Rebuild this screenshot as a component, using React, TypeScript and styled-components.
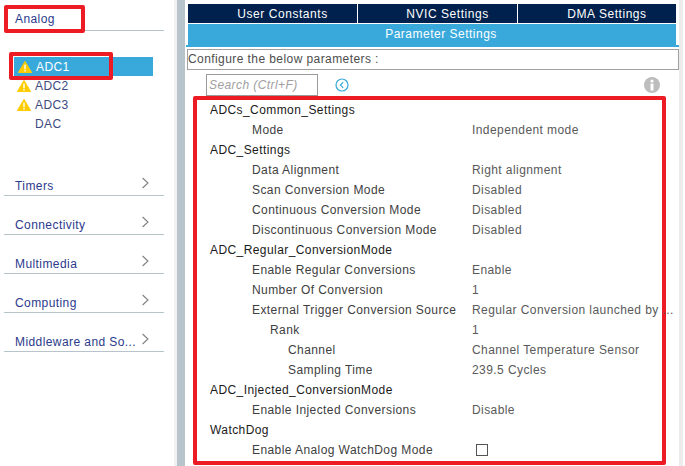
import React from 'react';
import styled, { createGlobalStyle } from 'styled-components';

const GlobalStyle = createGlobalStyle`
  html, body {
    margin: 0;
    padding: 0;
    background: #fff;
    overflow: hidden;
  }
  body {
    font-family: "Liberation Sans", Arial, sans-serif;
    font-size: 12px;
    letter-spacing: 0.42px;
  }
`;

const Page = styled.div`
  display: flex;
  width: 685px;
  height: 466px;
  overflow: hidden;
`;

const Sidebar = styled.aside`
  position: relative;
  box-sizing: border-box;
  width: 174px;
  flex: none;
  padding: 4px 10px 0 4px;
`;

const Divider = styled.div`
  flex: none;
  width: 3px;
  background: #f1f1f1;
`;

const Gutter = styled.div`
  flex: none;
  width: 8px;
  background: #b8c4cc;
`;

const RightRail = styled.div`
  flex: none;
  width: 4px;
  margin-right: 2px;
  background: #ececec;
`;

const SectionTitle = styled.div`
  box-sizing: border-box;
  height: 27px;
  padding: 8px 0 0 11px;
  border-bottom: 1px solid #b8c4cc;
  color: #2b3a8c;
  line-height: 14px;
`;

const AdcList = styled.ul`
  list-style: none;
  margin: 26px 11px 0 0;
  padding: 0 0 0 10px;
`;

const AdcRow = styled.li<{ $active?: boolean }>`
  display: flex;
  align-items: center;
  height: 19px;
  gap: 3px;
  padding-left: ${(p) => (p.$active ? 4 : 3)}px;
  color: ${(p) => (p.$active ? '#fff' : '#3c4a80')};
  background: ${(p) => (p.$active ? '#39a9dc' : 'transparent')};
`;

const IconSlot = styled.span`
  display: flex;
  width: 15px;
  flex: none;
`;

const Groups = styled.div`
  margin-top: 24px;
`;

const GroupRow = styled.div`
  box-sizing: border-box;
  display: flex;
  justify-content: space-between;
  height: 39px;
  padding: 22px 15px 0 11px;
  border-bottom: 1px solid #b8c4cc;
  color: #2b3a8c;
  line-height: 14px;
`;

const GroupLabel = styled.span`
  white-space: nowrap;
`;

const ChevronSlot = styled.span`
  display: flex;
  margin-top: -2px;
`;

const Callout = styled.div<{ $left: number; $top: number; $width: number; $height: number }>`
  position: absolute;
  left: ${(p) => p.$left}px;
  top: ${(p) => p.$top}px;
  width: ${(p) => p.$width}px;
  height: ${(p) => p.$height}px;
  box-sizing: border-box;
  border: 4px solid #ed1c24;
  border-radius: 2px;
`;

const Main = styled.main`
  flex: 1;
  min-width: 0;
  padding: 4px 0 0 2px;
`;

const Tabs = styled.div`
  display: grid;
  grid-template-columns: 169px 1fr 158px;
  gap: 1px;
  margin: 0 3px 0 1px;
`;

const Tab = styled.div`
  box-sizing: border-box;
  height: 19px;
  padding-left: 20px;
  background: #00214d;
  color: #fff;
  text-align: center;
  line-height: 20px;
  letter-spacing: 0.55px;
`;

const ActiveTab = styled.div`
  box-sizing: border-box;
  height: 21px;
  margin: 1px 3px 0 1px;
  padding-left: 18px;
  background: #39a9dc;
  color: #fff;
  text-align: center;
  line-height: 20px;
  letter-spacing: 0.5px;
`;

const TabEdge = styled.div`
  height: 2px;
  margin-left: -1px;
  background: #39a9dc;
`;

const ConfigureBox = styled.div`
  box-sizing: border-box;
  height: 21px;
  margin-top: 2px;
  border: 1px solid #a0a0a0;
  color: #4d4d4d;
  line-height: 18px;
  white-space: nowrap;
`;

const Toolbar = styled.div`
  display: flex;
  align-items: center;
  height: 22px;
  margin-top: 4px;
  padding: 0 19px 0 19px;
`;

const SearchBox = styled.div`
  box-sizing: border-box;
  width: 112px;
  height: 22px;
  padding-left: 2px;
  border: 1px solid #9a9a9a;
  color: #a0a0a0;
  font-style: italic;
  line-height: 20px;
  white-space: nowrap;
`;

const BackButton = styled.span`
  display: flex;
  margin-left: 17px;
`;

const InfoButton = styled.span`
  display: flex;
  margin-left: auto;
`;

const ParamPanel = styled.div`
  box-sizing: border-box;
  width: 473px;
  height: 369px;
  margin-left: 6px;
  padding-left: 13px;
  border: 4px solid #ed1c24;
  border-radius: 2px;
`;

const ParamRow = styled.div<{ $depth: number }>`
  display: flex;
  align-items: center;
  height: 20px;
  padding-left: ${(p) => [0, 42, 60, 78][p.$depth]}px;
  white-space: nowrap;
`;

const ParamName = styled.span<{ $depth: number }>`
  width: ${(p) => 262 - [0, 42, 60, 78][p.$depth]}px;
  flex: none;
  color: ${(p) => (p.$depth === 0 ? '#1a1a1a' : '#404040')};
`;

const ParamValue = styled.span`
  color: #595959;
`;

const CheckBox = styled.span`
  box-sizing: border-box;
  width: 12px;
  height: 12px;
  margin-left: 4px;
  border: 1px solid #555;
`;

const WarningIcon = () => (
  <svg width="14" height="12" viewBox="0 0 14 12">
    <path d="M7 0.5 L13.6 11.5 H0.4 Z" fill="#ffcc00" stroke="#ffcc00" strokeLinejoin="round" />
    <rect x="6.3" y="3.6" width="1.4" height="4.6" fill="#fff" />
    <rect x="6.3" y="9" width="1.4" height="1.5" fill="#fff" />
  </svg>
);

const Chevron = () => (
  <svg width="7" height="12" viewBox="0 0 7 12">
    <path d="M0.6 1 L6 6 L0.6 11" fill="none" stroke="#808080" strokeWidth="1.1" />
  </svg>
);

const BackIcon = () => (
  <svg width="14" height="14" viewBox="0 0 14 14">
    <circle cx="7" cy="7" r="6" fill="none" stroke="#39a9dc" strokeWidth="1.2" />
    <path d="M8.2 4.2 L5.4 7 L8.2 9.8" fill="none" stroke="#39a9dc" strokeWidth="1.2" />
  </svg>
);

const InfoIcon = () => (
  <svg width="16" height="16" viewBox="0 0 16 16">
    <circle cx="8" cy="8" r="8" fill="#bdbdbd" />
    <circle cx="8" cy="4" r="1.6" fill="#fff" />
    <rect x="6.5" y="6.6" width="3" height="7" fill="#fff" />
  </svg>
);

const adcs = [
  { name: 'ADC1', warn: true, active: true },
  { name: 'ADC2', warn: true },
  { name: 'ADC3', warn: true },
  { name: 'DAC', warn: false },
];

const groups = ['Timers', 'Connectivity', 'Multimedia', 'Computing', 'Middleware and So...'];

const params: { depth: number; name: string; value?: string; check?: boolean }[] = [
  { depth: 0, name: 'ADCs_Common_Settings' },
  { depth: 1, name: 'Mode', value: 'Independent mode' },
  { depth: 0, name: 'ADC_Settings' },
  { depth: 1, name: 'Data Alignment', value: 'Right alignment' },
  { depth: 1, name: 'Scan Conversion Mode', value: 'Disabled' },
  { depth: 1, name: 'Continuous Conversion Mode', value: 'Disabled' },
  { depth: 1, name: 'Discontinuous Conversion Mode', value: 'Disabled' },
  { depth: 0, name: 'ADC_Regular_ConversionMode' },
  { depth: 1, name: 'Enable Regular Conversions', value: 'Enable' },
  { depth: 1, name: 'Number Of Conversion', value: '1' },
  { depth: 1, name: 'External Trigger Conversion Source', value: 'Regular Conversion launched by ...' },
  { depth: 2, name: 'Rank', value: '1' },
  { depth: 3, name: 'Channel', value: 'Channel Temperature Sensor' },
  { depth: 3, name: 'Sampling Time', value: '239.5 Cycles' },
  { depth: 0, name: 'ADC_Injected_ConversionMode' },
  { depth: 1, name: 'Enable Injected Conversions', value: 'Disable' },
  { depth: 0, name: 'WatchDog' },
  { depth: 1, name: 'Enable Analog WatchDog Mode', check: true },
];

export default function App() {
  return (
    <Page>
      <GlobalStyle />
      <Sidebar>
        <SectionTitle>Analog</SectionTitle>
        <AdcList>
          {adcs.map((adc) => (
            <AdcRow key={adc.name} $active={adc.active}>
              <IconSlot>{adc.warn && <WarningIcon />}</IconSlot>
              {adc.name}
            </AdcRow>
          ))}
        </AdcList>
        <Groups>
          {groups.map((group) => (
            <GroupRow key={group}>
              <GroupLabel>{group}</GroupLabel>
              <ChevronSlot>
                <Chevron />
              </ChevronSlot>
            </GroupRow>
          ))}
        </Groups>
        <Callout $left={4} $top={5} $width={81} $height={28} />
        <Callout $left={9} $top={52} $width={104} $height={28} />
      </Sidebar>
      <Divider />
      <Gutter />
      <Main>
        <Tabs>
          <Tab>User Constants</Tab>
          <Tab>NVIC Settings</Tab>
          <Tab>DMA Settings</Tab>
        </Tabs>
        <ActiveTab>Parameter Settings</ActiveTab>
        <TabEdge />
        <ConfigureBox>Configure the below parameters :</ConfigureBox>
        <Toolbar>
          <SearchBox>Search (Ctrl+F)</SearchBox>
          <BackButton>
            <BackIcon />
          </BackButton>
          <InfoButton>
            <InfoIcon />
          </InfoButton>
        </Toolbar>
        <ParamPanel>
          {params.map((param) => (
            <ParamRow key={param.name} $depth={param.depth}>
              <ParamName $depth={param.depth}>{param.name}</ParamName>
              {param.value && <ParamValue>{param.value}</ParamValue>}
              {param.check && <CheckBox />}
            </ParamRow>
          ))}
        </ParamPanel>
      </Main>
      <RightRail />
    </Page>
  );
}
